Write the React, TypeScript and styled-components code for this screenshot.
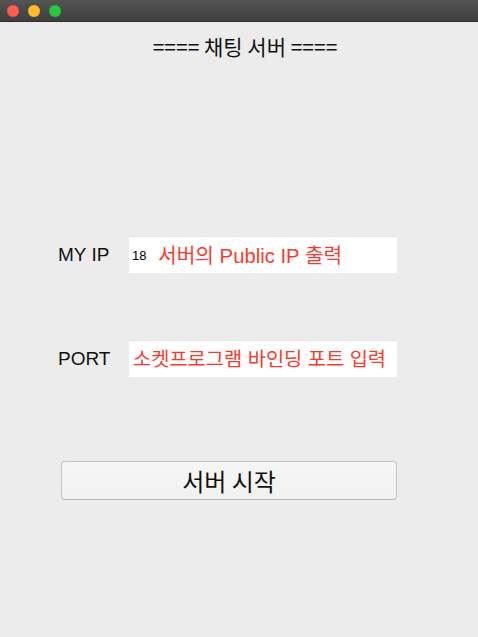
import React from "react";
import styled, { createGlobalStyle } from "styled-components";

const Global = createGlobalStyle`
  html, body { margin: 0; padding: 0; background: #ececec; }
  body { font-family: "Liberation Sans", "Noto Sans CJK KR", sans-serif; }
`;

const Window = styled.div`
  width: 478px;
  height: 637px;
  background: #ececec;
  display: flex;
  flex-direction: column;
  overflow: hidden;
`;

const TitleBar = styled.div`
  height: 22px;
  box-sizing: border-box;
  background: linear-gradient(#545454, #3f3f3f);
  border-bottom: 1px solid #2e2e2e;
  display: flex;
  align-items: center;
  gap: 9px;
  padding-left: 7px;
`;

const Light = styled.span<{ $c: string; $b: string }>`
  width: 12px;
  height: 12px;
  border-radius: 50%;
  background: ${(p) => p.$c};
  box-shadow: inset 0 0 0 0.5px ${(p) => p.$b};
`;

const Content = styled.div`
  display: flex;
  flex-direction: column;
  flex: 1;
`;

const Heading = styled.div`
  margin-top: 12px;
  padding-left: 12px;
  text-align: center;
  font-family: "Noto Sans CJK KR", "Liberation Sans", sans-serif;
  font-size: 21px;
  line-height: 24px;
  color: #111;
`;

const Form = styled.div`
  margin-top: 178px;
  display: flex;
  flex-direction: column;
  gap: 67px;
`;

const Row = styled.div`
  display: flex;
  align-items: center;
  padding-left: 58px;
`;

const Label = styled.div`
  width: 71px;
  font-family: "Liberation Sans", "Noto Sans CJK KR", sans-serif;
  font-size: 19px;
  color: #111;
`;

const Field = styled.div`
  position: relative;
  width: 268px;
  height: 37px;
  box-sizing: border-box;
  background: #fff;
  border-top: 1px solid #e2e2e2;
  display: flex;
  align-items: center;
  padding-left: 3px;
  font-family: "Liberation Sans", sans-serif;
  font-size: 13px;
  color: #000;
`;

const Note = styled.span<{ $left: number; $size: number }>`
  position: absolute;
  left: ${(p) => p.$left}px;
  top: 50%;
  transform: translateY(-55%);
  background: #fff;
  padding-right: 4px;
  color: #fc3a2b;
  font-family: "Liberation Sans", "Noto Sans CJK KR", sans-serif;
  font-size: ${(p) => p.$size}px;
  white-space: nowrap;
`;

const StartButton = styled.button`
  margin-top: 84px;
  margin-left: 61px;
  width: 336px;
  height: 39px;
  box-sizing: border-box;
  border: 1px solid #c6c6c6;
  border-bottom-color: #b4b4b4;
  border-radius: 4px;
  background: linear-gradient(#f6f6f6, #f1f1f1);
  font-family: "Noto Sans CJK KR", sans-serif;
  font-size: 24px;
  color: #111;
  padding: 0;
  display: flex;
  align-items: center;
  justify-content: center;
`;

export default function App() {
  return (
    <>
      <Global />
      <Window>
        <TitleBar>
          <Light $c="#fd5f57" $b="#e0443e" />
          <Light $c="#febc2e" $b="#dea123" />
          <Light $c="#28c840" $b="#1aab29" />
        </TitleBar>
        <Content>
          <Heading>==== 채팅 서버 ====</Heading>
          <Form>
            <Row>
              <Label>MY IP</Label>
              <Field>
                18
                <Note $left={29} $size={20.3}>서버의 Public IP 출력</Note>
              </Field>
            </Row>
            <Row>
              <Label>PORT</Label>
              <Field>
                <Note $left={4} $size={19.8}>소켓프로그램 바인딩 포트 입력</Note>
              </Field>
            </Row>
          </Form>
          <StartButton>서버 시작</StartButton>
        </Content>
      </Window>
    </>
  );
}
